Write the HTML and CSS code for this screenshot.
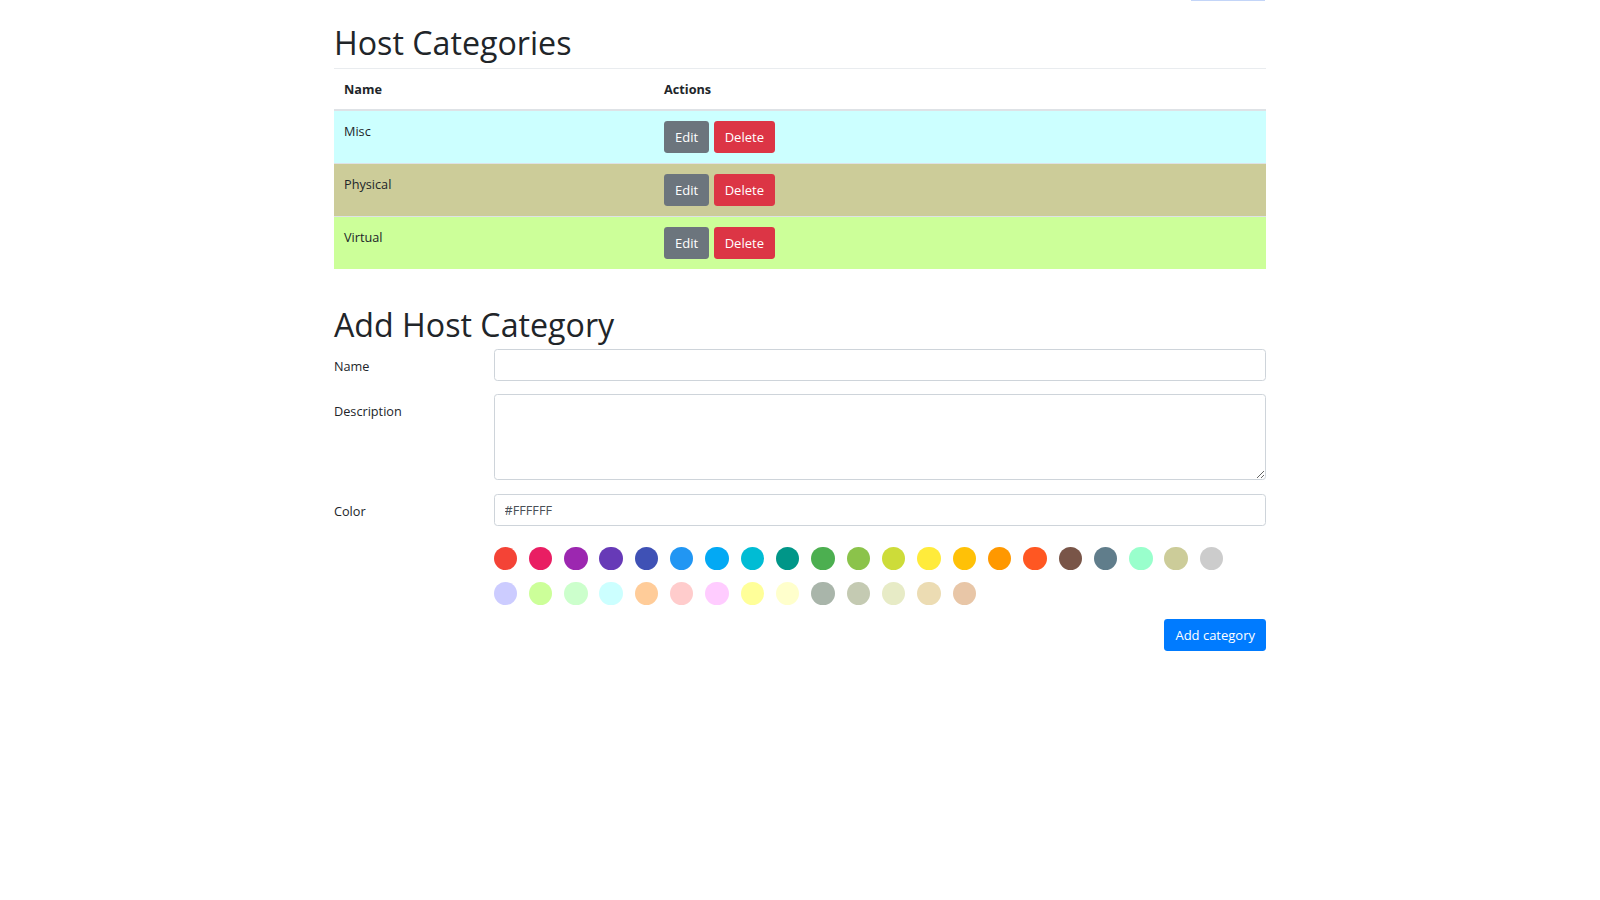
FILE: index.html
```html
<!DOCTYPE html>
<html lang="en">
<head>
<meta charset="utf-8">
<title>Host Categories</title>
<link rel="stylesheet" href="styles.css">
</head>
<body>
<div class="container">
  <div class="scroll-edge"></div>
  <h1 class="title">Host Categories</h1>
  <table class="cat-table">
    <thead>
      <tr><th class="col-name">Name</th><th>Actions</th></tr>
    </thead>
    <tbody>
      <tr class="row-misc">
        <td>Misc</td>
        <td><div class="actions"><button class="btn btn-grey">Edit</button><button class="btn btn-red">Delete</button></div></td>
      </tr>
      <tr class="row-physical">
        <td>Physical</td>
        <td><div class="actions"><button class="btn btn-grey">Edit</button><button class="btn btn-red">Delete</button></div></td>
      </tr>
      <tr class="row-virtual">
        <td>Virtual</td>
        <td><div class="actions"><button class="btn btn-grey">Edit</button><button class="btn btn-red">Delete</button></div></td>
      </tr>
    </tbody>
  </table>

  <h1 class="title title-add">Add Host Category</h1>
  <form class="cat-form">
    <label class="form-label" for="name">Name</label>
    <input class="form-input" id="name" type="text">

    <label class="form-label" for="desc">Description</label>
    <textarea class="form-input form-textarea" id="desc"></textarea>

    <label class="form-label" for="color">Color</label>
    <input class="form-input" id="color" type="text" value="#FFFFFF">

    <div></div>
    <div class="picker">
      <span class="swatch" style="background:#f44336"></span>
      <span class="swatch" style="background:#e91e63"></span>
      <span class="swatch" style="background:#9c27b0"></span>
      <span class="swatch" style="background:#673ab7"></span>
      <span class="swatch" style="background:#3f51b5"></span>
      <span class="swatch" style="background:#2196f3"></span>
      <span class="swatch" style="background:#03a9f4"></span>
      <span class="swatch" style="background:#00bcd4"></span>
      <span class="swatch" style="background:#009688"></span>
      <span class="swatch" style="background:#4caf50"></span>
      <span class="swatch" style="background:#8bc34a"></span>
      <span class="swatch" style="background:#cddc39"></span>
      <span class="swatch" style="background:#ffeb3b"></span>
      <span class="swatch" style="background:#ffc107"></span>
      <span class="swatch" style="background:#ff9800"></span>
      <span class="swatch" style="background:#ff5722"></span>
      <span class="swatch" style="background:#795548"></span>
      <span class="swatch" style="background:#607d8b"></span>
      <span class="swatch" style="background:#99ffcc"></span>
      <span class="swatch" style="background:#cccc99"></span>
      <span class="swatch" style="background:#cccccc"></span>
      <span class="swatch" style="background:#ccccff"></span>
      <span class="swatch" style="background:#ccff99"></span>
      <span class="swatch" style="background:#ccffcc"></span>
      <span class="swatch" style="background:#ccffff"></span>
      <span class="swatch" style="background:#ffcc99"></span>
      <span class="swatch" style="background:#ffcccc"></span>
      <span class="swatch" style="background:#ffccff"></span>
      <span class="swatch" style="background:#ffff99"></span>
      <span class="swatch" style="background:#ffffcc"></span>
      <span class="swatch" style="background:#a9b5aa"></span>
      <span class="swatch" style="background:#c4cab2"></span>
      <span class="swatch" style="background:#e7ebc6"></span>
      <span class="swatch" style="background:#ecdcb3"></span>
      <span class="swatch" style="background:#e8c6a7"></span>
    </div>

    <div class="submit-row">
      <button type="button" class="btn btn-blue">Add category</button>
    </div>
  </form>
</div>
</body>
</html>
```

FILE: styles.css
```css
html, body {
  margin: 0;
  padding: 0;
  background: #ffffff;
}

body {
  font-family: "Open Sans", "Noto Sans", sans-serif;
  font-size: 12.7px;
  line-height: 20px;
  color: #212529;
}

.container {
  position: relative;
  width: 932px;
  margin: 0 auto;
}

.scroll-edge {
  position: absolute;
  top: 0;
  right: 1px;
  width: 74px;
  height: 1px;
  background: #c3d5f8;
}

.title {
  margin: 0 0 5px;
  padding-top: 23px;
  font-size: 32.2px;
  line-height: 40px;
  font-weight: 400;
  color: #212529;
}

.title-add {
  padding-top: 0;
  margin-top: 36px;
  margin-bottom: 4px;
}

.cat-table {
  width: 100%;
  border-collapse: separate;
  border-spacing: 0;
}

.cat-table th {
  text-align: left;
  font-weight: 700;
  padding: 10px;
  line-height: 20px;
  border-top: 1px solid #e9ecef;
  border-bottom: 2px solid #dee2e6;
}

.cat-table th.col-name {
  width: 300px;
}

.cat-table td {
  padding: 10px;
  vertical-align: top;
  border-top: 1px solid #dee2e6;
}

.cat-table tbody tr:first-child td {
  border-top: none;
}

.row-misc td { background: #ccffff; }
.row-physical td { background: #cccc99; }
.row-virtual td { background: #ccff99; }

.actions {
  display: flex;
  gap: 4.6px;
}

.btn {
  height: 32px;
  padding: 0 11px;
  border: none;
  border-radius: 3.4px;
  font-family: inherit;
  font-size: 13px;
  color: #ffffff;
  cursor: pointer;
}

.btn-grey { background: #6c757d; }
.btn-red { background: #dc3545; }
.btn-blue { background: #007bff; }

.cat-form {
  display: grid;
  grid-template-columns: 159.5px 1fr;
  row-gap: 13.4px;
}

.form-label {
  padding-top: 7px;
  color: #212529;
}

.form-input {
  box-sizing: border-box;
  width: 100%;
  height: 32px;
  margin: 0;
  padding: 0 10px;
  border: 1px solid #ced4da;
  border-radius: 3.4px;
  font-family: inherit;
  font-size: 12.7px;
  color: #495057;
  background: #ffffff;
}

.form-textarea {
  height: 86px;
  padding: 6px 10px;
  resize: vertical;
}

.picker {
  display: flex;
  flex-wrap: wrap;
  width: 745px;
  padding-top: 7.5px;
  margin-bottom: -11.6px;
}

.swatch {
  width: 23.4px;
  height: 23.4px;
  border-radius: 50%;
  margin: 0 11.93px 11.6px 0;
}

.submit-row {
  grid-column: 1 / 3;
  display: flex;
  justify-content: flex-end;
  padding-top: 1px;
}
```
